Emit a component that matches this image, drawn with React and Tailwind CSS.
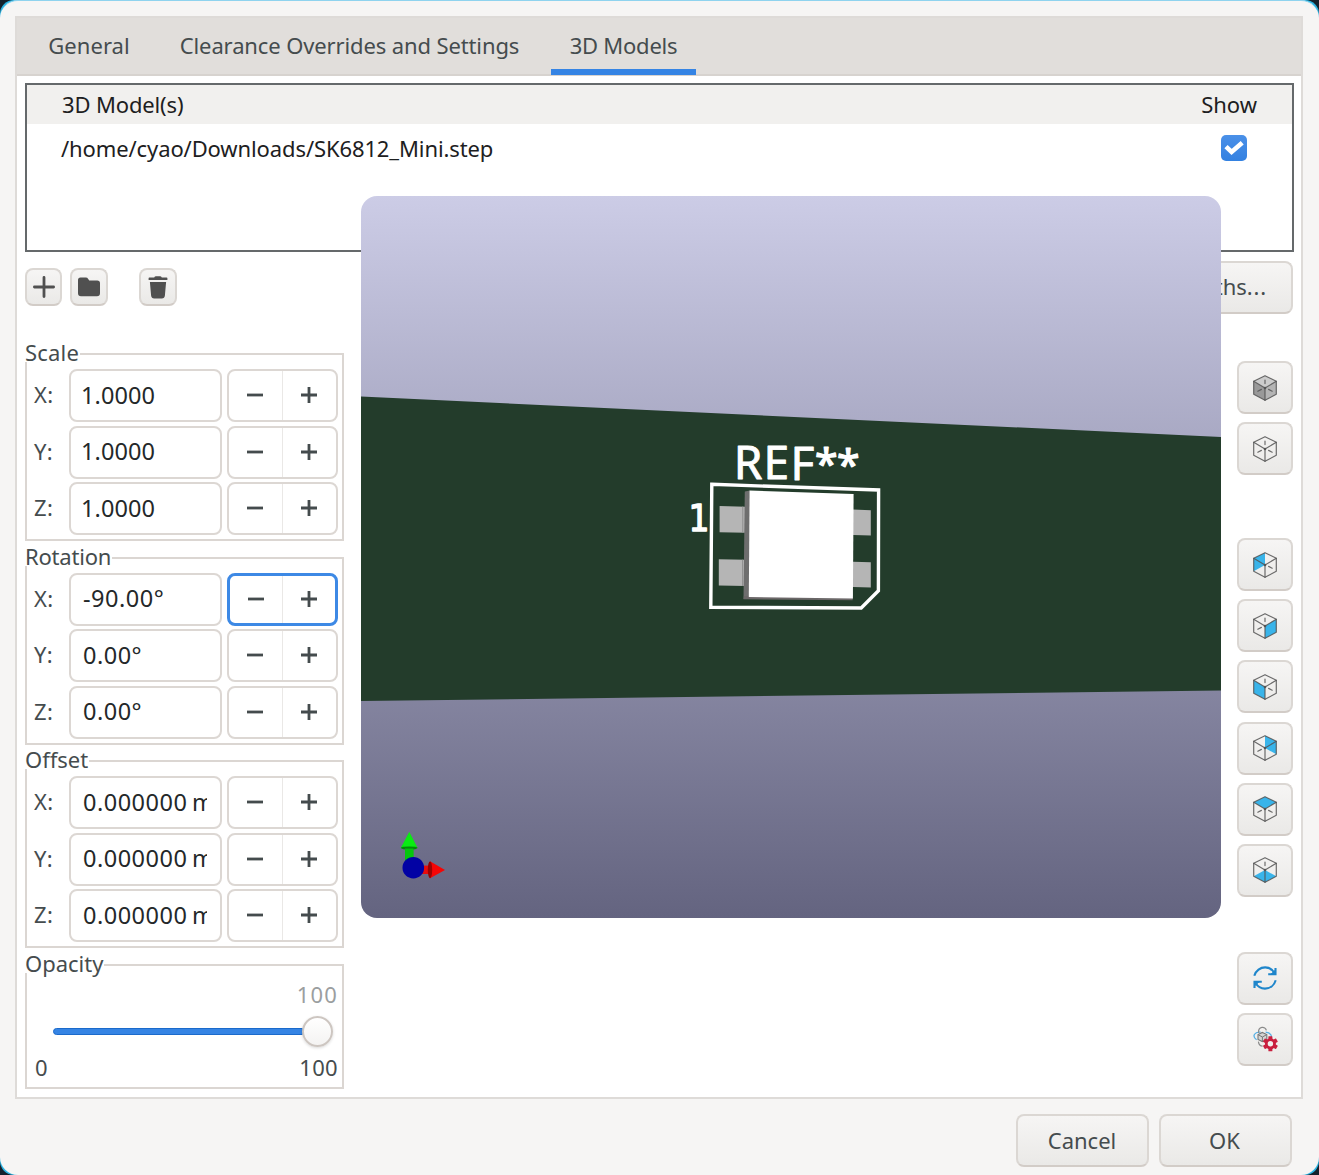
import React from "react";

const FACES = {
  top: "12,0.7 23.3,6.3 12,13 0.7,6.3",
  left: "0.7,6.3 12,13 12,25.3 0.7,19.3",
  right: "12,13 23.3,6.3 23.3,19.3 12,25.3",
  backLeft: "12,0.7 12,13 0.7,19.3 0.7,6.3",
  backRight: "12,0.7 23.3,6.3 23.3,19.3 12,13",
  bottom: "0.7,19.3 12,13 23.3,19.3 12,25.3",
};
const TICKS = {
  t: "M12 5V8.6",
  l: "M4.8 16.2L8.4 14.4",
  r: "M15.6 14.4L19.2 16.2",
};

function Cube({ fills = [], ticks = "" }) {
  return (
    <svg width="24" height="26" viewBox="0 0 24 26" fill="none">
      {fills.map(([face, color]) => (
        <polygon key={face} points={FACES[face]} fill={color} />
      ))}
      <g stroke="#545454" strokeOpacity="0.85" strokeWidth="1.2" strokeLinejoin="round" strokeLinecap="round">
        <path d="M12 0.7L23.3 6.3V19.3L12 25.3L0.7 19.3V6.3Z" />
        <path d="M0.7 6.3L12 13L23.3 6.3M12 13V25.3" />
        {ticks.split("").map((t) => (
          <path key={t} d={TICKS[t]} />
        ))}
      </g>
      <circle cx="12" cy="13" r="1.3" fill="#545454" />
    </svg>
  );
}

function RefreshIcon() {
  return (
    <svg width="24" height="24" viewBox="0 0 24 24" fill="none" stroke="#1f86cb" strokeWidth="2.1">
      <path d="M1.3 9.8C2.8 4.6 7.4 1.4 12.2 1.4C16.2 1.4 19.4 3.4 21.4 7" />
      <path d="M22.7 14.2C21.2 19.4 16.8 22.6 12 22.6C8 22.6 4.6 20.6 2.6 17" />
      <path d="M22.5 2V8.2H15.2" />
      <path d="M1.5 22V15.8H8.8" />
      <path d="M22.5 4V8.2H18ZM1.5 20V15.8H6Z" fill="#1f86cb" strokeWidth="1" />
    </svg>
  );
}

function GearIcon() {
  return (
    <svg width="26" height="26" viewBox="0 0 26 26" fill="none">
      <path d="M4.6 13.8C-0.6 10 3 5.4 8.6 6.2" stroke="#58b0e4" strokeWidth="1.3" />
      <path d="M13.6 6.2C18.6 6.6 20.6 9.8 18.6 13" stroke="#58b0e4" strokeWidth="1.3" />
      <path d="M6.6 7C5.8 0 13.6 0 14.4 4.4" stroke="#8a8a8a" strokeWidth="1.2" />
      <path d="M6.4 15.6C6.8 18.6 8.4 20.2 10.6 20.2" stroke="#8a8a8a" strokeWidth="1.2" />
      <path d="M10.4 6.4L14.8 8.6V13.4L10.4 15.6L6 13.4V8.6Z" fill="#d4d4d4" stroke="#777" strokeWidth="1.1" />
      <path d="M6 8.6L10.4 11L14.8 8.6M10.4 11V15.6" stroke="#777" strokeWidth="1" />
      <g transform="translate(18.4 17.8)">
        <g fill="#c9203f">
          <circle r="5.5" />
          {[0, 60, 120, 180, 240, 300].map((a) => (
            <rect key={a} x="-2" y="-7.5" width="4" height="4" rx="0.5" transform={`rotate(${a})`} />
          ))}
        </g>
        <circle r="2.7" fill="#f0efee" />
      </g>
    </svg>
  );
}

function Button({ className, children }) {
  return (
    <button
      className={
        "flex shrink-0 items-center justify-center border-2 border-[#dbd7d3] border-b-[#d2ccc7] bg-linear-to-b from-[#f6f5f4] to-[#eae9e7] text-[#454c4e] " +
        className
      }
    >
      {children}
    </button>
  );
}

function IconButton({ children }) {
  return <Button className="h-[53px] w-[56px] rounded-[8px]">{children}</Button>;
}

function Row({ axis, value, valueClass, focused }) {
  return (
    <div className="flex h-[53px] items-center">
      <span className="w-[35px] pb-[2px] text-[22px] tracking-[0.3px]">{axis}:</span>
      <div
        className={
          "flex h-[53px] w-[153px] items-center rounded-[8px] border-2 border-[#dcd7d3] pb-[2px] pr-[13px] text-[23.5px] text-[#242829] " +
          valueClass
        }
      >
        <span className="w-full overflow-hidden whitespace-nowrap leading-[32px]">{value}</span>
      </div>
      <div
        className={
          "ml-[5px] flex h-[53px] w-[111px] rounded-[8px] " +
          (focused ? "border-[3px] border-[#3d89e5] pr-0" : "border-2 border-[#dcd7d3] pr-[1px]")
        }
      >
        <div className="flex flex-1 items-center justify-center border-r border-[#eae8e6] pb-[1px]">
          <svg width="18" height="18" viewBox="0 0 18 18" stroke="#444b4d" strokeWidth="2.8">
            <path d="M1 9H17" />
          </svg>
        </div>
        <div className="flex flex-1 items-center justify-center pb-[1px]">
          <svg width="18" height="18" viewBox="0 0 18 18" stroke="#444b4d" strokeWidth="2.8">
            <path d="M1 9H17M9 1V17" />
          </svg>
        </div>
      </div>
    </div>
  );
}

function Group({ title, titleClass = "", className, children }) {
  return (
    <section className={"flex w-[319px] flex-col items-start border-2 border-[#dbd6d2] " + className}>
      <h2 className={"-ml-[3px] -mt-[15px] h-[22px] shrink-0 bg-white pl-[1px] pr-[1px] text-[22px] leading-[24px] " + titleClass}>
        {title}
      </h2>
      {children}
    </section>
  );
}

function AxisGroup({ title, titleClass, values, valueClass, focus, className = "" }) {
  return (
    <Group title={title} titleClass={titleClass} className={"h-[188px] " + className}>
      <div className="flex flex-col gap-[3.5px] pl-[7px] pt-[7px]">
        {["X", "Y", "Z"].map((a, i) => (
          <Row key={a} axis={a} value={values[i]} valueClass={valueClass} focused={focus === i} />
        ))}
      </div>
    </Group>
  );
}

function Viewport() {
  return (
    <svg className="block h-full w-full" viewBox="361 196 860 722" preserveAspectRatio="none">
      <defs>
        <linearGradient id="sky" x1="0" y1="0" x2="0" y2="1">
          <stop offset="0" stopColor="#cccce6" />
          <stop offset="1" stopColor="#646480" />
        </linearGradient>
      </defs>
      <rect x="361" y="196" width="860" height="722" fill="url(#sky)" />
      <polygon points="361,396.5 1221,437 1221,690.5 361,701" fill="#233c2b" />
      <polygon points="711.8,484.3 878.6,490 878.4,590.7 861.2,608 710.8,607.3" fill="none" stroke="#fff" strokeWidth="3.4" />
      <g fill="#b5b5b5">
        <polygon points="719.6,506 745.5,506.7 745.5,532.8 719.6,532.2" />
        <polygon points="718.8,559.3 745.5,559.7 745.5,586 718.8,585.4" />
        <polygon points="853,509.5 870.8,510.2 870.8,535.5 853,535" />
        <polygon points="853,561.7 870.8,562.2 870.8,587.5 853,587" />
      </g>
      <polygon points="744.8,491.5 750,490.5 750,599 743.5,599" fill="#6e6e6e" />
      <path d="M742.8 506.5V532.5M742.6 559.7V586" stroke="#8e8e8e" strokeWidth="1" />
      <polygon points="744,596 853,597 852.6,600.2 743.5,599.3" fill="#6b6768" />
      <polygon points="749.6,490.6 853.6,494 852.9,598.6 748.8,597" fill="#fff" />
      <g fill="#fff" stroke="#fff" strokeLinejoin="round" fontFamily="'Noto Sans', sans-serif">
        <text x="733.8 763.5 790.5" y="478.5 479.3 480" fontSize="46" strokeWidth="0.9">REF</text>
        <text x="815 837" y="478.8 479.8" fontSize="41" strokeWidth="1.2">**</text>
        <text x="688.5" y="531.2" fontSize="38" strokeWidth="1.4" fontFamily="'DejaVu Sans', sans-serif" textLength="21" lengthAdjust="spacingAndGlyphs">1</text>
      </g>
      <rect x="405" y="846" width="8.4" height="18" fill="#05c60d" />
      <polygon points="409.3,831.7 417.6,848 400.8,848" fill="#0aec12" />
      <ellipse cx="409.2" cy="848" rx="8.3" ry="1.6" fill="#048a0a" />
      <rect x="405" y="848.6" width="8.4" height="14" fill="#05c60d" />
      <rect x="422" y="865.6" width="8" height="8.4" fill="#e80c0c" />
      <polygon points="430,861.3 445,870 430,878.3" fill="#f50505" />
      <ellipse cx="430" cy="869.8" rx="2.2" ry="8.4" fill="#9a0303" />
      <circle cx="413.3" cy="867.7" r="10.8" fill="#0202a4" />
    </svg>
  );
}

const BLUE = "#39b4ea";

export default function App() {
  return (
    <div className="h-[1175px] w-[1319px] overflow-hidden bg-[#14212c] font-['Noto_Sans',sans-serif] text-[#454c4e]">
      <div className="h-full w-full rounded-[14px] bg-[#2bb4e2]">
        <div className="flex h-full w-full flex-col rounded-[18px] border-t border-[#8fd3ee] bg-[#f6f5f4] px-[15px] pt-[15px]">
          <main className="relative flex h-[1083px] w-[1288px] shrink-0 flex-col border-2 border-[#dedbd8] bg-white">
            <nav className="flex h-[58px] shrink-0 border-b-2 border-[#d7d3cf] bg-[#e1dedb] pl-[13px] text-[22px]">
              <div className="flex h-[54px] w-[118px] items-center justify-center tracking-[0.05px]">General</div>
              <div className="ml-[13px] flex h-[54px] w-[377px] items-center justify-center whitespace-nowrap tracking-[-0.12px]">
                Clearance Overrides and Settings
              </div>
              <div className="ml-[13px] flex h-[57px] w-[145px] items-center justify-center border-b-[6px] border-[#3584e4] pt-[3px] tracking-[-0.25px]">
                3D Models
              </div>
            </nav>

            <div className="ml-[8px] mt-[7px] flex h-[169px] w-[1269px] shrink-0 flex-col border-2 border-[#65696b] text-[22px] text-[#1d2021]">
              <div className="flex h-[39px] items-center justify-between bg-[#f1f0ee] pl-[35px] pr-[35px]">
                <span className="tracking-[-0.15px]">3D Model(s)</span>
                <span>Show</span>
              </div>
              <div className="flex h-[48px] items-center justify-between pl-[34px] pr-[45px]">
                <span className="tracking-[-0.11px]">/home/cyao/Downloads/SK6812_Mini.step</span>
                <span className="mb-[1px] flex h-[26px] w-[26px] items-center justify-center rounded-[5px] bg-linear-to-b from-[#4a90e8] to-[#3381e1]">
                  <svg width="20" height="16" viewBox="0 0 20 16" fill="none" stroke="#fff" strokeWidth="4.6">
                    <path d="M2 6.6L7.6 12L18.2 2.8" />
                  </svg>
                </span>
              </div>
            </div>

            <div className="ml-[8px] mt-[9px] flex h-[53px] w-[1268px] shrink-0 items-center">
              <Button className="mb-[1px] h-[38px] w-[37px] rounded-[8px]">
                <svg width="22" height="22" viewBox="0 0 22 22" stroke="#505050" strokeWidth="2.8" strokeLinecap="round">
                  <path d="M1.4 11H20.6M11 1.4V20.6" />
                </svg>
              </Button>
              <Button className="mb-[1px] ml-[8px] h-[38px] w-[38px] rounded-[8px]">
                <svg width="24" height="20" viewBox="0 0 24 20" fill="#505050">
                  <path d="M3.5 0.6H8.8Q10.4 0.6 11.2 2L12.2 3.4H20.2Q23 3.4 23 6.2V16.2Q23 19.2 20 19.2H4Q1 19.2 1 16.2V3.1Q1 0.6 3.5 0.6Z" />
                </svg>
              </Button>
              <Button className="mb-[1px] ml-[31px] h-[38px] w-[38px] rounded-[8px]">
                <svg width="20" height="23" viewBox="0 0 20 23" fill="#505050">
                  <path d="M0.6 2.2Q0.6 1.6 1.4 1.6H6.2Q6.8 0.3 8 0.3H12Q13.2 0.3 13.8 1.6H18.6Q19.4 1.6 19.4 2.2V4H0.6ZM1.9 6H18.1L16.9 19.4Q16.6 22.4 13.8 22.4H6.2Q3.4 22.4 3.1 19.4Z" />
                </svg>
              </Button>
              <Button className="ml-auto h-[53px] w-[230px] rounded-[8px] pb-[2px] pr-[8px] text-[22px]">
                <span>
                  Configure Paths<span className="tracking-[0.8px]">...</span>
                </span>
              </Button>
            </div>

            <div className="ml-[8px] flex w-[1268px] justify-between">
              <div className="mt-[39px] flex flex-col">
                <AxisGroup title="Scale" titleClass="tracking-[0.2px]" valueClass="pl-[10px] tracking-[0.1px]" values={["1.0000", "1.0000", "1.0000"]} />
                <AxisGroup
                  title="Rotation"
                  titleClass="tracking-[-0.2px]"
                  className="mt-[15.7px]"
                  focus={0}
                  valueClass="pl-[12px] tracking-[0.5px]"
                  values={["-90.00°", "0.00°", "0.00°"]}
                />
                <AxisGroup
                  title="Offset"
                  className="mt-[15.7px]"
                  valueClass="pl-[12px] tracking-[0.5px] [word-spacing:-2px]"
                  values={["0.000000 mm", "0.000000 mm", "0.000000 mm"]}
                />
                <Group title="Opacity" className="mt-[15.7px] h-[125px]">
                  <div className="flex w-full flex-col pl-[8px] pr-[4px] text-[22px] leading-[30px]">
                    <span className="mt-[6px] text-right tracking-[1.2px] text-[#9b9e9f]">100</span>
                    <div className="mt-[1px] flex h-[32px] items-center pl-[18px] pt-[11px]">
                      <div className="h-[7px] w-[250px] rounded-l-full border border-[#1b6acb] bg-[#3584e4]" />
                      <div className="-ml-[1px] h-[31px] w-[31px] shrink-0 rounded-full border-2 border-[#cdc6c1] bg-linear-to-b from-white to-[#f4f3f2] shadow-[0_1px_3px_rgba(0,0,0,0.15)]" />
                    </div>
                    <div className="mt-[10px] flex justify-between tracking-[0.3px]">
                      <span>0</span>
                      <span>100</span>
                    </div>
                  </div>
                </Group>
              </div>

              <div className="mt-[47px] flex flex-col">
                <div className="flex flex-col gap-[8px]">
                  <IconButton><Cube fills={[["top", "#cccccc"], ["left", "#999999"], ["right", "#b4b4b4"]]} ticks="tlr" /></IconButton>
                  <IconButton><Cube ticks="tlr" /></IconButton>
                </div>
                <div className="mt-[63px] flex flex-col gap-[8.2px]">
                  <IconButton><Cube fills={[["backLeft", BLUE]]} ticks="r" /></IconButton>
                  <IconButton><Cube fills={[["right", BLUE]]} ticks="tl" /></IconButton>
                  <IconButton><Cube fills={[["left", BLUE]]} ticks="tr" /></IconButton>
                  <IconButton><Cube fills={[["backRight", BLUE]]} ticks="l" /></IconButton>
                  <IconButton><Cube fills={[["top", BLUE]]} ticks="lr" /></IconButton>
                  <IconButton><Cube fills={[["bottom", BLUE]]} ticks="t" /></IconButton>
                </div>
                <div className="mt-[55px] flex flex-col gap-[8px]">
                  <IconButton><RefreshIcon /></IconButton>
                  <IconButton><GearIcon /></IconButton>
                </div>
              </div>
            </div>

            <div className="absolute left-[344px] top-[178px] h-[722px] w-[860px] overflow-hidden rounded-[16px]">
              <Viewport />
            </div>
          </main>

          <footer className="mt-[15px] flex shrink-0 justify-end gap-[10px] pr-[12px] text-[22px]">
            <Button className="h-[53px] w-[133px] rounded-[8px] pb-[1px] pr-[1px]">Cancel</Button>
            <Button className="h-[53px] w-[133px] rounded-[8px] pb-[1px] pr-[2px]">OK</Button>
          </footer>
        </div>
      </div>
    </div>
  );
}
